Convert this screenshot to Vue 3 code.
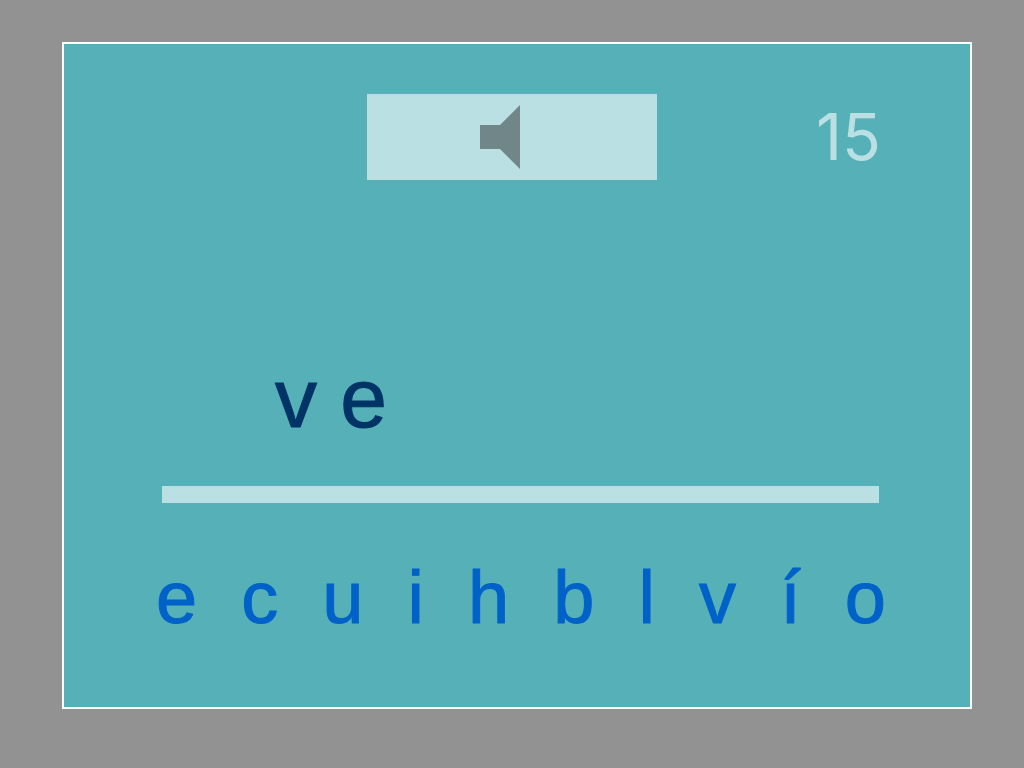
<script setup>
const answer = ['v', 'e']
const letters = ['e', 'c', 'u', 'i', 'h', 'b', 'l', 'v', 'í', 'o']
</script>

<template>
  <main class="page">
    <section class="slide">
      <header class="top">
        <button class="sound" type="button" aria-label="Play sound">
          <svg viewBox="0 0 40 64" aria-hidden="true">
            <path d="M0 20H20L40 0V64L20 44H0Z" />
          </svg>
        </button>
        <span class="count">15</span>
      </header>
      <p class="answer">{{ answer.join(' ') }}</p>
      <hr class="line" />
      <div class="letters">
        <button v-for="letter in letters" :key="letter" type="button" class="letter">{{ letter }}</button>
      </div>
    </section>
  </main>
</template>

<style>
body {
  background: #929292;
}
</style>

<style scoped>
.page {
  box-sizing: border-box;
  min-height: 100vh;
  padding: 42px 52px 59px 62px;
  display: flex;
  background: #929292;
  font-family: "Liberation Sans", Arial, sans-serif;
}
.slide {
  box-sizing: border-box;
  flex: 1;
  border: 2px solid #fff;
  background: #55b0b8;
  padding: 50px 84px 0 92px;
}
.top {
  display: grid;
  grid-template-columns: 211fr 290px 224fr;
  padding: 0 5px 0 0;
}
.sound {
  grid-column: 2;
  height: 86px;
  margin: 0;
  padding: 0 24px 0 0;
  border: 0;
  background: #bbe0e3;
  display: flex;
  align-items: center;
  justify-content: center;
}
.sound svg {
  width: 40px;
  height: 64px;
  fill: #708688;
}
.count {
  justify-self: end;
  align-self: center;
  font-family: Inter, "Liberation Sans", sans-serif;
  font-size: 64px;
  line-height: 72px;
  color: #bbe0e3;
}
.answer {
  margin: 170px 0 0 119px;
  font-size: 84px;
  line-height: 96px;
  color: #003366;
  -webkit-text-stroke: 1px #003366;
}
.line {
  height: 17px;
  margin: 40px 7px 0 6px;
  border: 0;
  background: #bbe0e3;
}
.letters {
  display: flex;
  justify-content: space-between;
  margin-top: 53px;
}
.letter {
  margin: 0;
  padding: 0;
  border: 0;
  background: none;
  font-family: inherit;
  font-size: 74px;
  line-height: 84px;
  color: #0062c8;
  -webkit-text-stroke: 1px #0062c8;
}
</style>
